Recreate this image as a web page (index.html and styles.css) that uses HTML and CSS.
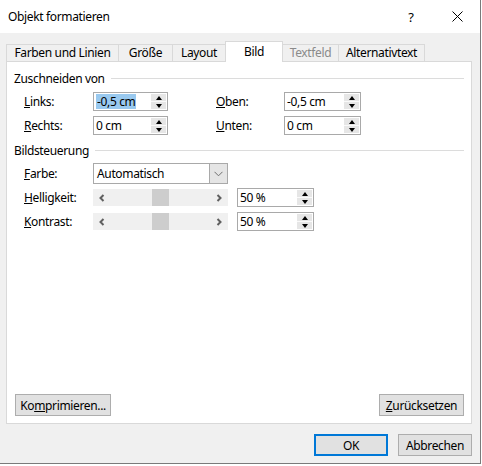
FILE: index.html
```html
<!DOCTYPE html>
<html lang="de">
<head>
<meta charset="utf-8">
<title>Objekt formatieren</title>
<link rel="stylesheet" href="styles.css">
</head>
<body>
<div class="window">
  <div class="titlebar">
    <span class="title">Objekt formatieren</span>
    <span class="help">?</span>
    <span class="close"><svg width="11" height="11" viewBox="0 0 11 11"><path d="M0.5 0.5 L10.5 10.5 M10.5 0.5 L0.5 10.5" stroke="#000" stroke-width="1" fill="none"/></svg></span>
  </div>
  <div class="content">
    <div class="tabs">
      <div class="tab t1">Farben und Linien</div>
      <div class="tab t2">Größe</div>
      <div class="tab t3">Layout</div>
      <div class="tab t4 selected">Bild</div>
      <div class="tab t5 disabled">Textfeld</div>
      <div class="tab t6">Alternativtext</div>
    </div>
    <div class="panel">
      <div class="group"><span>Zuschneiden von</span></div>
      <div class="crop">
        <span class="lbl"><u>L</u>inks:</span>
        <div class="spin"><span class="val"><span class="sel">-0,5 cm</span></span><span class="btns"><span class="up"></span><span class="down"></span></span></div>
        <span></span>
        <span class="lbl"><u>O</u>ben:</span>
        <div class="spin"><span class="val">-0,5 cm</span><span class="btns"><span class="up"></span><span class="down"></span></span></div>
        <span class="lbl"><u>R</u>echts:</span>
        <div class="spin"><span class="val">0 cm</span><span class="btns"><span class="up"></span><span class="down"></span></span></div>
        <span></span>
        <span class="lbl"><u>U</u>nten:</span>
        <div class="spin"><span class="val">0 cm</span><span class="btns"><span class="up"></span><span class="down"></span></span></div>
      </div>
      <div class="group g2"><span>Bildsteuerung</span></div>
      <div class="ctrl">
        <span class="lbl"><u>F</u>arbe:</span>
        <div class="combo"><span class="val">Automatisch</span><span class="drop"><svg width="9" height="6" viewBox="0 0 9 6"><polyline points="0.5,0.8 4.5,4.8 8.5,0.8" stroke="#707070" stroke-width="1" fill="none"/></svg></span></div>
      </div>
      <div class="ctrl2">
        <span class="lbl"><u>H</u>elligkeit:</span>
        <div class="scroll"><svg class="arr" width="6" height="8" viewBox="0 0 6 8"><polyline points="4.5,1 1.5,4 4.5,7" stroke="#606060" stroke-width="2" fill="none"/></svg><span class="track"><span class="thumb"></span></span><svg class="arr" width="6" height="8" viewBox="0 0 6 8"><polyline points="1.5,1 4.5,4 1.5,7" stroke="#606060" stroke-width="2" fill="none"/></svg></div>
        <span></span>
        <div class="spin"><span class="val">50 %</span><span class="btns"><span class="up"></span><span class="down"></span></span></div>
        <span class="lbl"><u>K</u>ontrast:</span>
        <div class="scroll"><svg class="arr" width="6" height="8" viewBox="0 0 6 8"><polyline points="4.5,1 1.5,4 4.5,7" stroke="#606060" stroke-width="2" fill="none"/></svg><span class="track"><span class="thumb"></span></span><svg class="arr" width="6" height="8" viewBox="0 0 6 8"><polyline points="1.5,1 4.5,4 1.5,7" stroke="#606060" stroke-width="2" fill="none"/></svg></div>
        <span></span>
        <div class="spin"><span class="val">50 %</span><span class="btns"><span class="up"></span><span class="down"></span></span></div>
      </div>
      <div class="spacer"></div>
      <div class="panel-buttons">
        <button class="btn b-komp">Ko<u>m</u>primieren...</button>
        <button class="btn b-reset"><u>Z</u>urücksetzen</button>
      </div>
    </div>
    <div class="footer">
      <button class="btn b-ok">OK</button>
      <button class="btn b-cancel">Abbrechen</button>
    </div>
  </div>
</div>
</body>
</html>
```

FILE: styles.css
```css
* { box-sizing: border-box; }
body {
  margin: 0;
  background: #ffffff;
  font-family: "Segoe UI", "Noto Sans", sans-serif;
  font-size: 12px;
  letter-spacing: -0.35px;
  color: #000;
}
.window {
  width: 481px;
  height: 464px;
  background: #f0f0f0;
  border-right: 1px solid #7a7a7a;
  border-bottom: 1px solid #7a7a7a;
  display: flex;
  flex-direction: column;
}
.titlebar {
  height: 33px;
  background: #fff;
  display: flex;
  align-items: center;
  padding-left: 8px;
  flex: none;
}
.title { flex: 1; }
.help {
  width: 46px;
  text-align: center;
  font-size: 13px;
}
.close {
  width: 46px;
  display: flex;
  justify-content: center;
  align-items: center;
}
.close svg { display: block; }
.content {
  flex: 1;
  padding: 8px 8px 0 6px;
  display: flex;
  flex-direction: column;
}
.tabs {
  display: flex;
  align-items: flex-end;
  height: 20px;
  position: relative;
  z-index: 2;
}
.tab {
  height: 17px;
  border: 1px solid #d9d9d9;
  border-bottom: none;
  margin-right: -1px;
  display: flex;
  justify-content: center;
  align-items: center;
  background: #f0f0f0;
  line-height: 14px;
}
.t1 { width: 113px; }
.t2 { width: 55px; }
.t3 { width: 54px; }
.t4 { width: 58px; }
.t5 { width: 57px; }
.t6 { width: 87px; }
.tab.selected {
  height: 21px;
  background: #fff;
  margin-bottom: -1px;
  position: relative;
  z-index: 3;
  align-items: flex-start;
  padding-top: 3px;
}
.tab.disabled { color: #8a8a8a; }
.panel {
  height: 363px;
  background: #fff;
  border: 1px solid #d9d9d9;
  padding: 8px 7px 7px;
  display: flex;
  flex-direction: column;
  position: relative;
  z-index: 1;
}
.group {
  display: flex;
  align-items: center;
  height: 16px;
}
.group::after {
  content: "";
  flex: 1;
  height: 1px;
  background: #dcdcdc;
  margin-left: 6px;
}
.g2 { margin-top: 7px; }
.lbl { line-height: 16px; }
.crop {
  margin-top: 6px;
  padding-left: 10px;
  display: grid;
  grid-template-columns: 69px 75px 48px 68px 77px;
  grid-auto-rows: 19px;
  row-gap: 5px;
  align-items: center;
}
.spin {
  height: 19px;
  border: 1px solid #a9a9a9;
  display: flex;
  align-items: stretch;
  background: #fff;
}
.spin .val {
  flex: 1;
  padding-left: 2px;
  display: flex;
  align-items: center;
}
.sel {
  background: #99c9ef;
  padding: 0 1px;
  line-height: 15px;
}
.btns {
  width: 15px;
  margin: 1px 1px 1px 0;
  display: flex;
  flex-direction: column;
}
.btns span {
  flex: 1;
  background: #e6e6e6;
  display: flex;
  justify-content: center;
  align-items: center;
}
.btns .up { border-bottom: 1px solid #fafafa; }
.btns .up::after {
  content: "";
  border-left: 3px solid transparent;
  border-right: 3px solid transparent;
  border-bottom: 4px solid #000;
}
.btns .down::after {
  content: "";
  border-left: 3px solid transparent;
  border-right: 3px solid transparent;
  border-top: 4px solid #000;
}
.ctrl {
  margin-top: 5px;
  padding-left: 10px;
  display: grid;
  grid-template-columns: 69px 135px;
  align-items: center;
}
.combo {
  height: 21px;
  border: 1px solid #a9a9a9;
  display: flex;
  align-items: stretch;
}
.combo .val {
  flex: 1;
  padding-left: 3px;
  display: flex;
  align-items: center;
}
.drop {
  width: 18px;
  background: #e5e5e5;
  border-left: 1px solid #a9a9a9;
  display: flex;
  justify-content: center;
  align-items: center;
}
.drop svg { display: block; }
.ctrl2 {
  margin-top: 4px;
  padding-left: 10px;
  display: grid;
  grid-template-columns: 69px 135px 9px 77px;
  grid-auto-rows: 19px;
  row-gap: 5px;
  align-items: center;
}
.scroll {
  height: 17px;
  background: #f0f0f0;
  display: flex;
  align-items: center;
}
.scroll .arr {
  display: block;
  margin: 0 6px;
}
.track {
  flex: 1;
  align-self: stretch;
  position: relative;
}
.thumb {
  position: absolute;
  left: 41px;
  top: 0;
  bottom: 0;
  width: 17px;
  background: #cdcdcd;
}
.spacer { flex: 1; }
.panel-buttons {
  display: flex;
  justify-content: space-between;
  padding-left: 1px;
}
.btn {
  font-family: inherit;
  font-size: 12px;
  letter-spacing: -0.35px;
  color: #000;
  height: 22px;
  background: #e1e1e1;
  border: 1px solid #adadad;
  padding: 0;
  margin: 0;
}
.b-komp { width: 96px; }
.b-reset { width: 85px; }
.footer {
  display: flex;
  justify-content: flex-end;
  gap: 10px;
  padding-top: 10px;
}
.b-ok {
  width: 74px;
  border: 2px solid #0078d7;
}
.b-cancel { width: 74px; }
```
